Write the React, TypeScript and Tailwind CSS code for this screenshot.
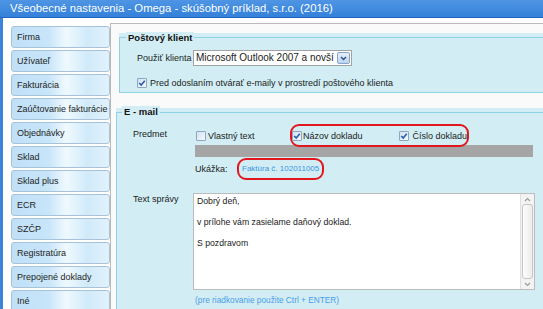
import React from "react";

const Check = ({ checked }: { checked?: boolean }) => (
  <span className="w-[10px] h-[10px] shrink-0 border border-[#8ea6c2] bg-[linear-gradient(135deg,#d3e1f2,#f5f9fd)] rounded-[1px] flex items-center justify-center">
    {checked && (
      <svg width="8" height="8" viewBox="0 0 8 8">
        <path d="M1.2 4 L3.2 6 L6.8 1.8" stroke="#2a5cb0" strokeWidth="1.6" fill="none" />
      </svg>
    )}
  </span>
);

const navItems = [
  "Firma",
  "Užívateľ",
  "Fakturácia",
  "Zaúčtovanie fakturácie",
  "Objednávky",
  "Sklad",
  "Sklad plus",
  "ECR",
  "SZČP",
  "Registratúra",
  "Prepojené doklady",
  "Iné",
];

export default function App() {
  return (
    <div className="w-[543px] h-[309px] overflow-hidden flex flex-col bg-white font-['Liberation_Sans',Arial,sans-serif] text-[#1b1b1b]">
      <div className="h-[18px] shrink-0 bg-[linear-gradient(#4f95e4,#3481da)] border-b border-[#2163c0] text-white text-[11.3px] leading-[17px] pl-[10px] whitespace-nowrap">
        Všeobecné nastavenia - Omega - skúšobný príklad, s.r.o. (2016)
      </div>
      <div className="flex flex-1 min-h-0">
        <div className="w-[3px] shrink-0 bg-[#3b84da]" />
        <div className="w-[107px] shrink-0 bg-white pt-[8px] pl-[8px] flex flex-col gap-[2px]">
          {navItems.map((n) => (
            <div
              key={n}
              className="w-[99px] h-[22px] shrink-0 rounded-[3px] border border-[#a8c2da] bg-[linear-gradient(to_right,#c1e0f8_0%,#c8e5f9_38%,#f0f9fe_56%,#d0eafa_78%,#e1f2fc_100%)] text-[9px] leading-[20px] pl-[5px] whitespace-nowrap text-[#1e1e1e]"
            >
              {n}
            </div>
          ))}
        </div>
        <div className="flex-1 min-w-0 flex flex-col pt-[5px]">
          <div className="flex-1 min-h-0 flex flex-col border-t border-l border-[#b9b9b9] bg-[#fafafa]">
            {/* Poštový klient */}
            <div className="ml-[8px] mt-[9px] pt-[4px] bg-[#d2eef4]">
              <div className="w-[440px] border-l border-t border-b border-[#8dd3e3] pb-[4px]">
                <div className="-mt-[6px] ml-[6px] px-[2px] w-fit bg-[#d2eef4] font-bold text-[9.5px] leading-[12px] text-[#111]">
                  Poštový klient
                </div>
                <div className="flex items-center mt-[6px] pl-[17px]">
                  <div className="w-[56px] text-[9px] leading-[12px] whitespace-nowrap">Použiť klienta</div>
                  <div className="w-[159px] h-[16px] border border-[#a2a2a2] bg-white flex items-center pl-[2px] pr-[1px]">
                    <span className="text-[10px] leading-[12px] whitespace-nowrap">Microsoft Outlook 2007 a novší</span>
                    <span className="ml-auto w-[13px] h-[12px] rounded-[2px] border border-[#86a5cc] bg-[linear-gradient(#e6f0fb,#bcd3ee)] flex items-center justify-center">
                      <svg width="7" height="5" viewBox="0 0 7 5">
                        <path d="M1 1 L3.5 3.5 L6 1" stroke="#2c4f86" strokeWidth="1.3" fill="none" />
                      </svg>
                    </span>
                  </div>
                </div>
                <div className="flex items-center gap-[3px] mt-[12px] pl-[17px]">
                  <Check checked />
                  <span className="text-[9px] leading-[10px] whitespace-nowrap">
                    Pred odoslaním otvárať e-maily v prostredí poštového klienta
                  </span>
                </div>
              </div>
            </div>

            {/* E - mail */}
            <div className="ml-[5px] mt-[15px] pt-[4px] bg-[#d2eef4] flex-1 min-h-0 flex flex-col">
              <div className="w-[440px] flex-1 border-l border-t border-[#8dd3e3]">
                <div className="-mt-[7px] ml-[5px] px-[2px] w-fit bg-[#d2eef4] font-bold text-[9.5px] leading-[12px] text-[#111]">
                  E - mail
                </div>
                <div className="flex mt-[6px] pl-[16px]">
                  <div className="w-[60px] mt-[4px] text-[9px] leading-[12px]">Predmet</div>
                  <div className="flex items-center h-[23px]">
                    <div className="w-[94px] ml-[3px] mt-[1px] flex items-center gap-[2px]">
                      <Check />
                      <span className="text-[9px] leading-[12px] whitespace-nowrap">Vlastný text</span>
                    </div>
                    <div className="relative z-10 w-[179px] h-[23px] border-2 border-[#e2161d] rounded-[9px] flex items-center">
                      <div className="w-[111px] mt-[1px] flex items-center gap-[1px]">
                        <Check checked />
                        <span className="text-[9px] leading-[12px] whitespace-nowrap">Názov dokladu</span>
                      </div>
                      <div className="mt-[1px] flex items-center gap-[3px]">
                        <Check checked />
                        <span className="text-[9px] leading-[12px] whitespace-nowrap">Číslo dokladu</span>
                      </div>
                    </div>
                  </div>
                </div>
                <div className="ml-[78px] -mt-[2px] w-[338px] h-[12px] bg-[#a5a5a5]" />
                <div className="flex items-center ml-[78px] mt-[1px] h-[22px]">
                  <div className="w-[42px] text-[9px] leading-[12px]">Ukážka:</div>
                  <div className="w-[87px] h-[22px] border-2 border-[#e2161d] rounded-[9px] pl-[3px] flex items-center">
                    <span className="text-[8px] leading-[12px] text-[#3d93e4] whitespace-nowrap">Faktúra č. 102011005</span>
                  </div>
                </div>
                <div className="flex mt-[13px] pl-[16px]">
                  <div className="w-[60px] text-[9px] leading-[12px] whitespace-nowrap">Text správy</div>
                  <div className="w-[342px] h-[97px] border border-[#bcbcbc] bg-white flex">
                    <div className="flex-1 pl-[3px] pt-[1px] flex flex-col gap-[9px] text-[8.7px] leading-[12px] whitespace-nowrap">
                      <div>Dobrý deň,</div>
                      <div>v prílohe vám zasielame daňový doklad.</div>
                      <div>S pozdravom</div>
                    </div>
                    <div className="w-[14px] flex flex-col bg-[#f3f3f3] border-l border-[#e0e0e0]">
                      <div className="h-[10px] flex items-center justify-center">
                        <svg width="7" height="5" viewBox="0 0 7 5">
                          <path d="M1 4 L3.5 1.5 L6 4" stroke="#9a9a9a" strokeWidth="1.1" fill="none" />
                        </svg>
                      </div>
                      <div className="flex-1 mx-[1px] rounded-[3px] border border-[#c6c6c6] bg-[linear-gradient(to_right,#fdfdfd,#ececec)]" />
                      <div className="h-[10px] flex items-center justify-center">
                        <svg width="7" height="5" viewBox="0 0 7 5">
                          <path d="M1 1 L3.5 3.5 L6 1" stroke="#9a9a9a" strokeWidth="1.1" fill="none" />
                        </svg>
                      </div>
                    </div>
                  </div>
                </div>
                <div className="mt-[4px] ml-[78px] text-[8.3px] leading-[12px] text-[#4b9ceb] whitespace-nowrap">
                  (pre riadkovanie použite Ctrl + ENTER)
                </div>
              </div>
            </div>
          </div>
        </div>
      </div>
    </div>
  );
}
